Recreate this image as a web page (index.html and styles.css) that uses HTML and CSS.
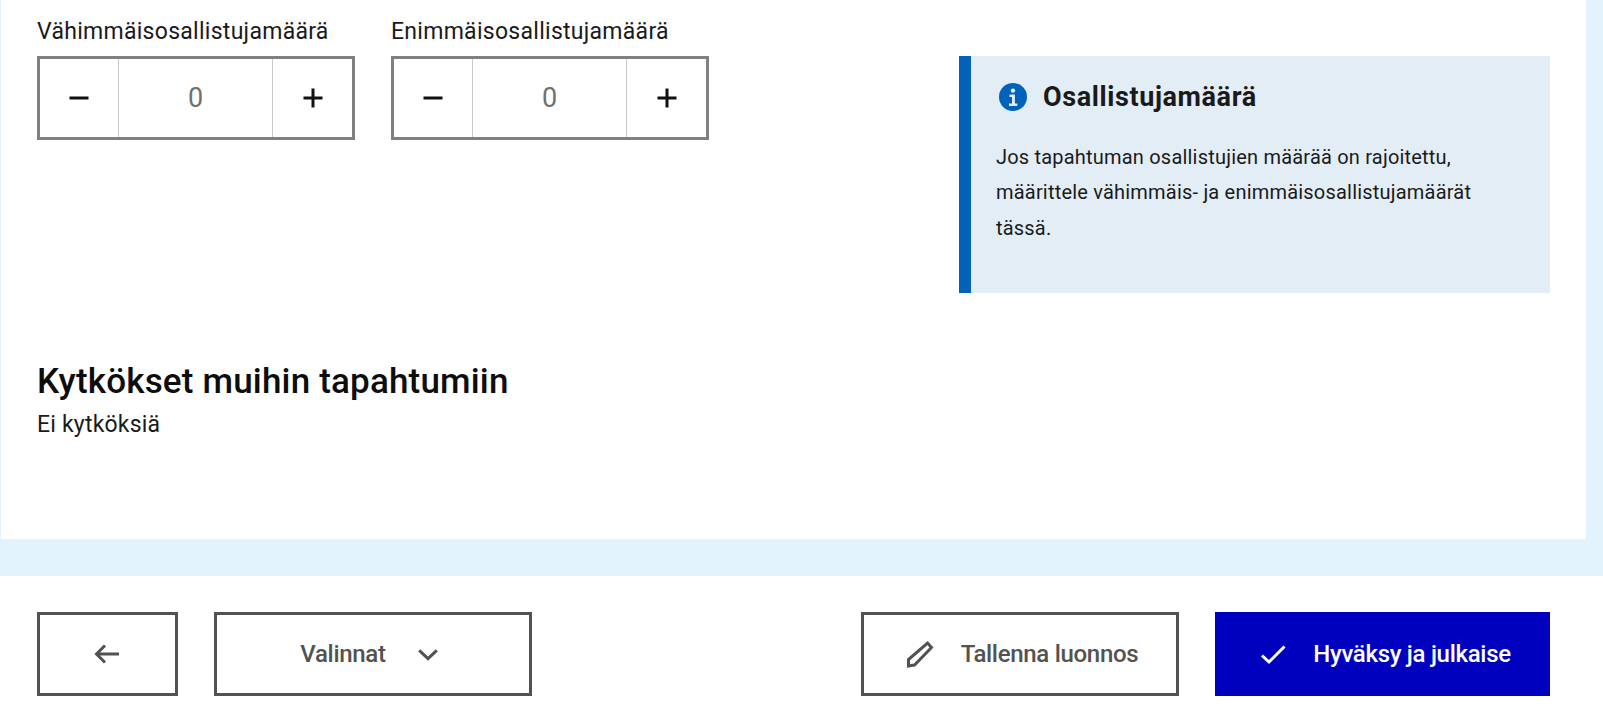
FILE: index.html
```html
<!DOCTYPE html>
<html lang="fi">
<head>
<meta charset="utf-8">
<title>Tapahtuma</title>
<link rel="stylesheet" href="styles.css">
</head>
<body>
<main class="page">
  <section class="panel">
    <div class="row">
      <div class="fields">
        <div class="field">
          <label class="label">Vähimmäisosallistujamäärä</label>
          <div class="stepper">
            <button class="step step-minus" type="button" aria-label="Vähennä"><svg class="step-icon" viewBox="0 0 24 24"><path d="M2.500 12h19" /></svg></button>
            <div class="value">0</div>
            <button class="step step-plus" type="button" aria-label="Lisää"><svg class="step-icon" viewBox="0 0 24 24"><path d="M2.500 12h19M12 2.500v19" /></svg></button>
          </div>
        </div>
        <div class="field">
          <label class="label">Enimmäisosallistujamäärä</label>
          <div class="stepper">
            <button class="step step-minus" type="button" aria-label="Vähennä"><svg class="step-icon" viewBox="0 0 24 24"><path d="M2.500 12h19" /></svg></button>
            <div class="value">0</div>
            <button class="step step-plus" type="button" aria-label="Lisää"><svg class="step-icon" viewBox="0 0 24 24"><path d="M2.500 12h19M12 2.500v19" /></svg></button>
          </div>
        </div>
      </div>
      <aside class="info">
        <h3 class="info-title">
          <svg class="info-icon" viewBox="0 0 28 28"><circle cx="14" cy="14" r="14" fill="#0062b9"/><circle cx="14" cy="7.600" r="2.200" fill="#e3edf6"/><path d="M10.500 11.600h5.400v9h2.400v2.400H10v-2.400h3v-6.600h-2.500z" fill="#e3edf6"/></svg>
          Osallistujamäärä
        </h3>
        <p class="info-text">Jos tapahtuman osallistujien määrää on rajoitettu,<br>määrittele vähimmäis- ja enimmäisosallistujamäärät<br>tässä.</p>
      </aside>
    </div>
    <h2 class="heading">Kytkökset muihin tapahtumiin</h2>
    <p class="empty">Ei kytköksiä</p>
  </section>
</main>
<footer class="footer">
  <div class="group">
    <button class="btn btn-back" type="button" aria-label="Takaisin">
      <svg class="icon" viewBox="0 0 32 32"><path d="M28 16H5M14 7.500L5.500 16l8.500 8.500"/></svg>
    </button>
    <button class="btn btn-menu" type="button">Valinnat
      <svg class="icon" viewBox="0 0 32 32"><path d="M7.200 12.400L16 20.600l8.800-8.200"/></svg>
    </button>
  </div>
  <div class="group">
    <button class="btn btn-draft" type="button">
      <svg class="icon" viewBox="0 0 32 32"><path d="M23.500 5l4 4.500L10.500 27l-6 1v-6.500z"/></svg>
      Tallenna luonnos
    </button>
    <button class="btn btn-primary" type="button">
      <svg class="icon" viewBox="0 0 32 32"><path d="M5 17.500l7 6.500L27.500 8.500"/></svg>
      Hyväksy ja julkaise
    </button>
  </div>
</footer>
</body>
</html>
```

FILE: styles.css
```css
* { box-sizing: border-box; }
html, body { margin: 0; padding: 0; height: 726px; overflow: hidden; }
body { font-family: Roboto, "Liberation Sans", sans-serif; color: #1a1a1a; background: #fff; }

.page { background: #e3f3fe; height: 576px; padding-right: 17px; border-bottom: 1px solid #e8eef2; }
.panel { background: #fff; height: 539px; border-left: 1px solid #e3f3fe; padding: 17px 36px 0; }

.row { display: flex; justify-content: space-between; align-items: flex-start; }
.fields { display: flex; gap: 36px; }
.field { width: 318px; }
.label { display: block; font-size: 23px; letter-spacing: .28px; line-height: 30px; margin-bottom: 9px; color: #1a1a1a; }

.stepper { display: flex; height: 84px; border: 3px solid #808080; background: #fff; }
.step { border: 0; background: #fff; padding: 0; display: flex; align-items: center; justify-content: center; flex: none; }
.step-minus { width: 79px; border-right: 1px solid #c8c8c8; }
.step-plus { width: 80px; border-left: 1px solid #c8c8c8; }
.step-icon { width: 24px; height: 24px; fill: none; stroke: #111; stroke-width: 3; }
.value { flex: 1; display: flex; align-items: center; justify-content: center; font-size: 27px; color: #707070; }

.info { width: 591px; height: 237px; margin-top: 39px; background: #e3edf6; border-left: 12px solid #0062b9; padding: 26px 28px 0 25px; }
.info-title { display: flex; align-items: center; gap: 16px; margin: 0 0 28px 3px; font-size: 27px; line-height: 30px; font-weight: 700; letter-spacing: .6px; }
.info-icon { width: 28px; height: 28px; flex: none; }
.info-text { margin: 0; font-size: 20px; letter-spacing: .2px; line-height: 35.3px; }

.heading { margin: 0; padding-top: 67px; font-size: 35px; letter-spacing: .18px; line-height: 44px; font-weight: 500; color: #0d0d0d; }
.empty { margin: 6px 0 0; font-size: 23px; letter-spacing: .2px; line-height: 30px; }

.footer { height: 150px; display: flex; justify-content: space-between; align-items: flex-start; padding: 36px 53px 0 37px; }
.group { display: flex; gap: 36px; }
.btn { height: 84px; display: flex; align-items: center; justify-content: center; background: #fff; border: 3px solid #525252; color: #525252; font: 500 24px Roboto, sans-serif; letter-spacing: -.3px; padding: 0; }
.btn-back { width: 141px; padding-right: 2px; }
.btn-menu { width: 318px; gap: 26px; padding-right: 2px; }
.btn-draft { width: 318px; gap: 25px; padding-left: 2px; }
.btn-primary { width: 335px; gap: 24px; padding-left: 3px; background: #0000bf; border-color: #0000bf; color: #fff; }
.icon { width: 32px; height: 32px; flex: none; fill: none; stroke: currentColor; stroke-width: 3; }
```
